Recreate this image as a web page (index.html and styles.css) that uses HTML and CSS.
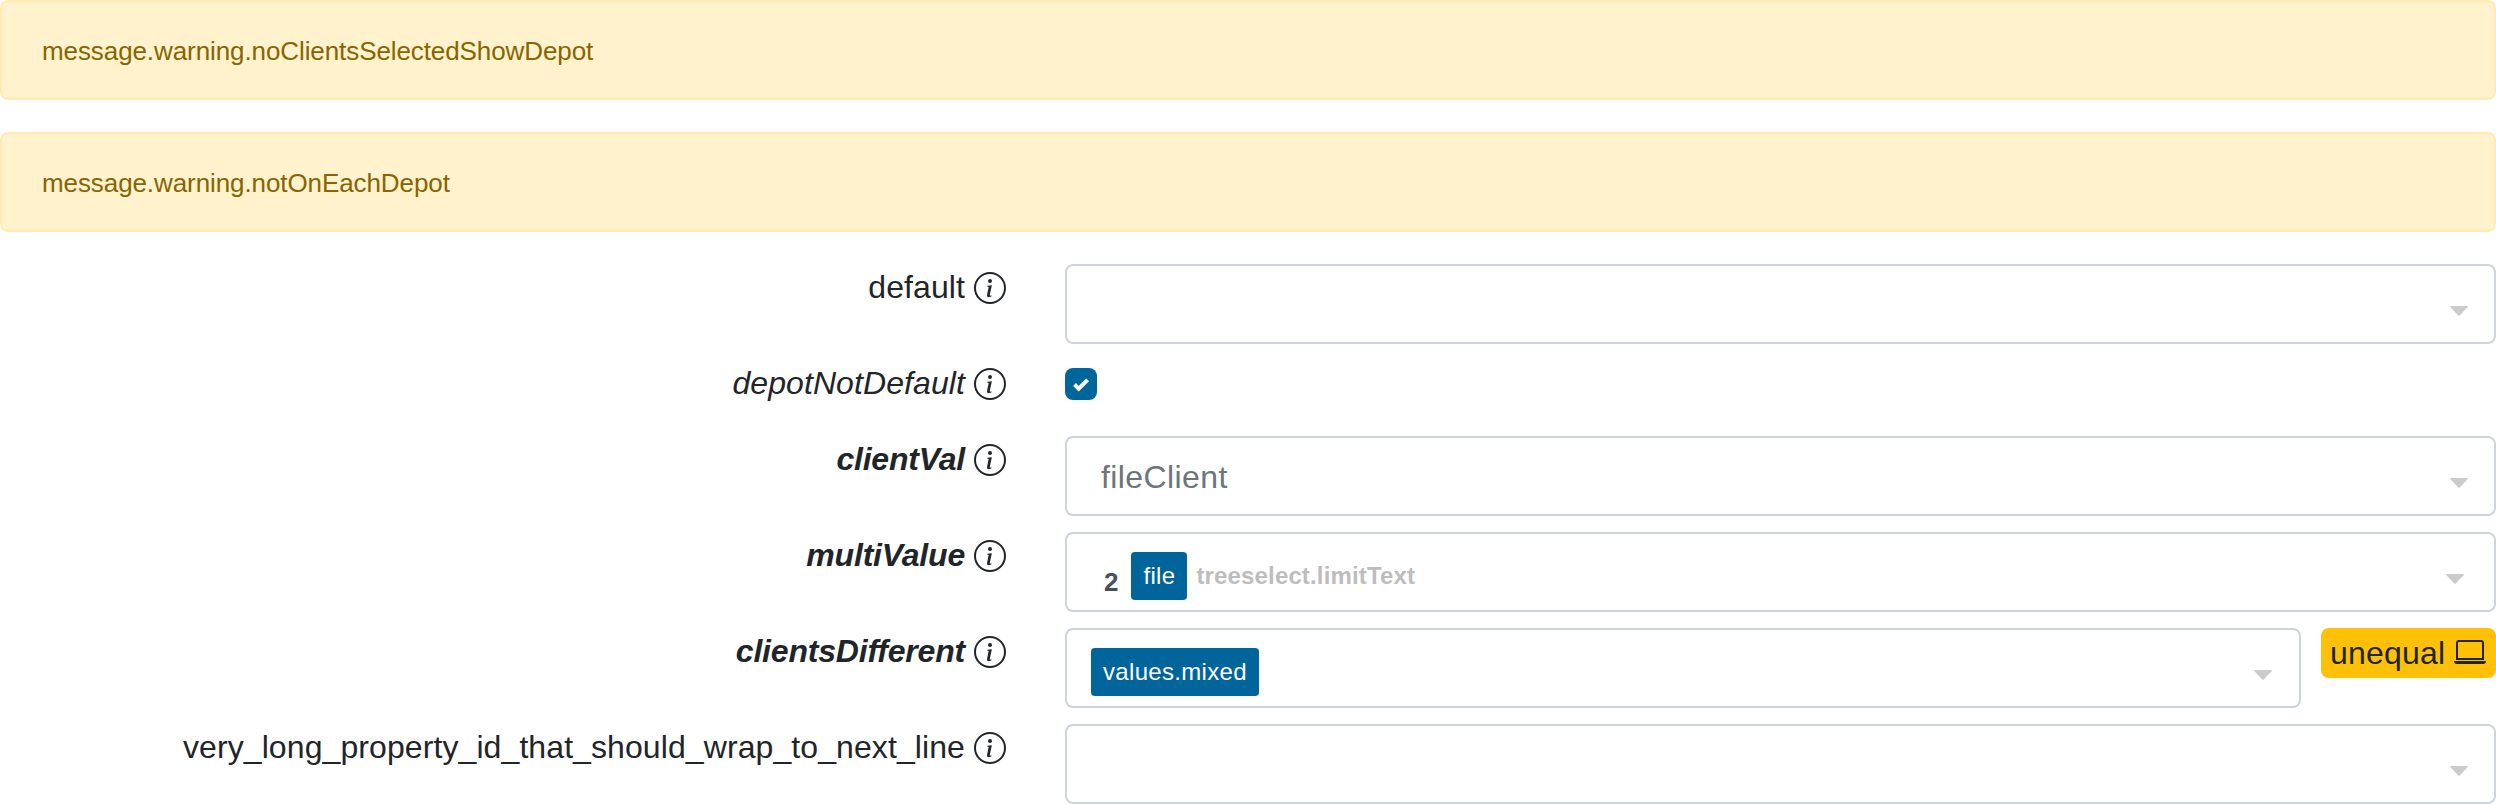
FILE: index.html
```html
<!DOCTYPE html>
<html lang="en">
<head>
<meta charset="utf-8">
<title>Properties</title>
<link rel="stylesheet" href="styles.css">
</head>
<body>
<svg class="defs" aria-hidden="true">
  <symbol id="info" viewBox="0 0 16 16"><path d="M8 15A7 7 0 1 1 8 1a7 7 0 0 1 0 14zm0 1A8 8 0 1 0 8 0a8 8 0 0 0 0 16z"/><path d="m8.930 6.588-2.290.287-.082.380.450.083c.294.070.352.176.288.469l-.738 3.468c-.194.897.105 1.319.808 1.319.545 0 1.178-.252 1.465-.598l.088-.416c-.200.176-.492.246-.686.246-.275 0-.375-.193-.304-.533L8.930 6.588zM9 4.500a1 1 0 1 1-2 0 1 1 0 0 1 2 0z"/></symbol>
  <symbol id="laptop" viewBox="0 0 16 16"><path d="M13.500 3a.5.5 0 0 1 .5.5V11H2V3.500a.5.5 0 0 1 .5-.5h11zm-11-1A1.500 1.500 0 0 0 1 3.500V12h14V3.500A1.500 1.500 0 0 0 13.500 2h-11zM0 12.500h16a1.500 1.500 0 0 1-1.500 1.500h-13A1.500 1.500 0 0 1 0 12.500z"/></symbol>
  <symbol id="caret" viewBox="0 0 18 10"><path d="M.8 0H17.200Q18.400.4 17.600 1.300L9.700 9.600Q9 10.300 8.300 9.600L.4 1.300Q-.4.4.8 0z"/></symbol>
</svg>
<div class="alert">message.warning.noClientsSelectedShowDepot</div>
<div class="alert">message.warning.notOnEachDepot</div>
<form class="rows">
  <div class="row">
    <label class="name"><span>default</span><svg class="icon"><use href="#info"/></svg></label>
    <div class="select"><svg class="caret"><use href="#caret"/></svg></div>
  </div>
  <div class="row row-check">
    <label class="name italic"><span>depotNotDefault</span><svg class="icon"><use href="#info"/></svg></label>
    <div class="check"><svg class="tick" viewBox="0 0 32 32"><path d="M9.500 16.500 13.700 20.700 22.600 11.800"/></svg></div>
  </div>
  <div class="row">
    <label class="name italic bold"><span>clientVal</span><svg class="icon"><use href="#info"/></svg></label>
    <div class="select"><span class="placeholder">fileClient</span><svg class="caret"><use href="#caret"/></svg></div>
  </div>
  <div class="row">
    <label class="name italic bold"><span>multiValue</span><svg class="icon"><use href="#info"/></svg></label>
    <div class="select multi"><span class="count">2</span><span class="chip">file</span><span class="limit">treeselect.limitText</span><svg class="caret"><use href="#caret"/></svg></div>
  </div>
  <div class="row">
    <label class="name italic bold"><span>clientsDifferent</span><svg class="icon"><use href="#info"/></svg></label>
    <div class="select mixed"><span class="chip">values.mixed</span><svg class="caret"><use href="#caret"/></svg></div>
    <div class="badge"><span>unequal</span><svg class="icon"><use href="#laptop"/></svg></div>
  </div>
  <div class="row">
    <label class="name"><span>very_long_property_id_that_should_wrap_to_next_line</span><svg class="icon"><use href="#info"/></svg></label>
    <div class="select"><svg class="caret"><use href="#caret"/></svg></div>
  </div>
</form>
</body>
</html>
```
FILE: styles.css
```css
* { box-sizing: border-box; }
body {
  margin: 0;
  background: #fff;
  color: #212529;
  font: 32px/48px "Liberation Sans", Arial, sans-serif;
  font-feature-settings: "liga" 1;
}
svg { display: block; fill: currentColor; flex: none; }
.defs { display: none; }
.alert {
  height: 100px;
  margin-bottom: 32px;
  padding: 30px 40px 0;
  border: 2px solid #ffecb5;
  border-radius: 8px;
  background: #fff2cd;
  color: #876500;
  font-size: 26px;
  line-height: 39px;
  letter-spacing: -.09px;
}
.rows { display: flex; flex-direction: column; gap: 16px; }
.row { display: flex; align-items: flex-start; height: 80px; }
.row-check { height: 60px; }
.name {
  display: flex;
  justify-content: flex-end;
  flex: none;
  gap: 9px;
  width: 1006px;
  margin-right: 59px;
  letter-spacing: .09px;
}
.name span { margin-top: -1px; }
.icon { width: 32px; height: 32px; margin-top: 8px; }
.italic { font-style: italic; }
.bold { font-weight: bold; letter-spacing: -.2px; }
.select {
  display: flex;
  align-items: flex-start;
  flex: 1;
  height: 80px;
  padding: 18px 26px 0 24px;
  border: 2px solid #ced4da;
  border-radius: 8px;
}
.caret { width: 18px; height: 10px; margin: 22px 0 0 auto; color: #ccc; }
.placeholder { margin: -3px 0 0 10px; line-height: 48px; color: #6c757d; letter-spacing: .4px; }
.check { width: 32px; height: 32px; margin-top: 8px; border-radius: 8px; background: #00659a; }
.tick { width: 32px; height: 32px; fill: none; stroke: #fff; stroke-width: 4; }
.chip {
  height: 48px;
  padding: 0 12px;
  border-radius: 4px;
  background: #00659a;
  color: #fff;
  font-size: 24px;
  line-height: 48px;
  letter-spacing: .32px;
}
.count { margin: 6px 13px 0 13px; color: #495057; font-size: 26px; font-weight: bold; line-height: 48px; }
.limit { margin-left: 9px; color: #bdbdbd; font-size: 24px; font-weight: bold; line-height: 48px; letter-spacing: .15px; }
.multi { padding-right: 30px; }
.mixed { padding-right: 27px; }
.badge {
  display: flex;
  justify-content: space-between;
  flex: none;
  width: 175px;
  height: 50px;
  margin-left: 20px;
  padding: 1px 10px 1px 9px;
  border-radius: 8px;
  background: #ffc107;
  letter-spacing: .2px;
}
.badge .icon { margin-top: 7px; }
```
